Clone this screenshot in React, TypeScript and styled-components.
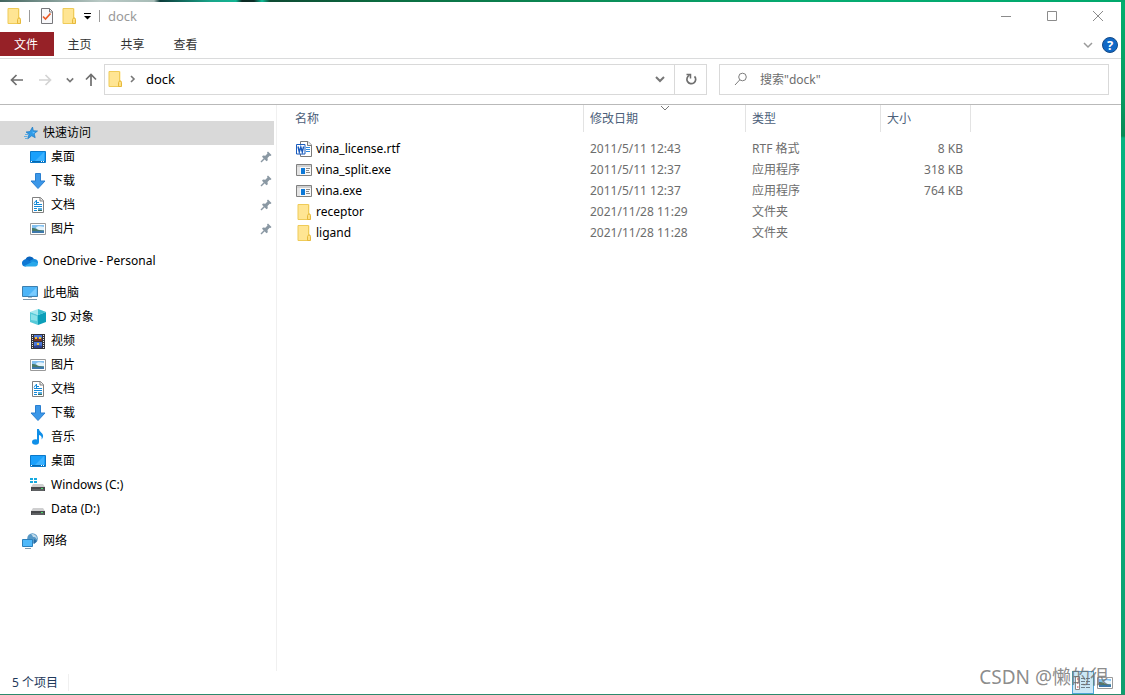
import React from "react";
import styled, { createGlobalStyle } from "styled-components";

const GlobalStyle = createGlobalStyle`
  *, *::before, *::after { box-sizing: border-box; }
  body {
    margin: 0;
    font-family: "Noto Sans", "Noto Sans CJK SC", sans-serif;
    font-size: 12px;
    line-height: 16px;
    color: #000;
  }
  button, input { font: inherit; color: inherit; }
  svg { display: block; flex: none; }
`;

/* ---------- icons ---------- */

const FolderIcon = () => (
  <svg width="14" height="16" viewBox="0 0 14 16" aria-hidden="true">
    <path d="M1 .5h11.500v10h.5v5H1z" fill="#ffe593" />
    <path d="M1 .5h10.500v9.500h1.500v5.500h-12z" fill="none" stroke="#efcb58" />
    <path d="M10.500 15.500v-4l1-1.500h1l1 1.500v4z" fill="#ffe082" stroke="#e6b93c" />
  </svg>
);

const CheckPageIcon = () => (
  <svg width="16" height="16" viewBox="0 0 16 16" aria-hidden="true">
    <path d="M3.500 .5h8l3 3v12h-11z" fill="#f8f8fa" stroke="#77777b" />
    <path d="M11.500 .5v3.500h3" fill="none" stroke="#77777b" />
    <path d="M5 8.500l2.500 2.500 5-5.500" fill="none" stroke="#ea5a26" strokeWidth="1.700" />
  </svg>
);

const StarIcon = () => (
  <svg width="16" height="16" viewBox="0 0 16 16" aria-hidden="true">
    <path
      d="M10.500 2l.8 3.700 4.200.3-3.300 2.700 1 4-3.500-1.900-4 3 1.300-4.500-3-2.300 4-.4z"
      fill="#2f9be8"
      stroke="#1b78c2"
      strokeWidth=".7"
    />
    <path d="M3 9.500h3M2 11.500h3.500M3 13.500h2" stroke="#63aee2" />
    <path d="M10 4l.8 3 2.400.2-2.300 1.600z" fill="#6cc4ff" />
  </svg>
);

const DesktopIcon = () => (
  <svg width="16" height="16" viewBox="0 0 16 16" aria-hidden="true">
    <path d="M.5 2.500h15v11h-15z" fill="#1aa0fb" stroke="#0b78c9" />
    <path d="M14 3v9L5 12z" fill="#3cb2ff" />
    <path d="M1 12.500h14" stroke="#0668ae" />
    <path d="M1 12.500h1M11 12.500h1M13 12.500h1" stroke="#fff" />
  </svg>
);

const DownloadIcon = () => (
  <svg width="16" height="16" viewBox="0 0 16 16" aria-hidden="true">
    <path d="M5.500 .5h5v7.500h4.500L8 15.500 1 8h4.500z" fill="#3b97e8" stroke="#2a7fd0" />
  </svg>
);

const DocumentIcon = () => (
  <svg width="16" height="16" viewBox="0 0 16 16" aria-hidden="true">
    <path d="M2.500 .5h8l3 3v12h-11z" fill="#fff" stroke="#808080" />
    <path d="M10 .5v3.500h3.500" fill="#ececec" stroke="#808080" />
    <path d="M4 6.500l2-3M6.500 3v4M7 5.500h2M4 7.500h8M4 9.500h8" stroke="#1489d8" fill="none" />
    <path d="M4 11.500h3M4 13.500h3" stroke="#1489d8" />
    <path d="M8 11h4v2H8z" fill="#58aee0" />
    <path d="M8 13h4v1H8z" fill="#3a6a5a" />
  </svg>
);

const PictureIcon = () => (
  <svg width="16" height="16" viewBox="0 0 16 16" aria-hidden="true">
    <path d="M.5 2.500h15v11h-15z" fill="#fff" stroke="#9a9a9a" />
    <path d="M2 4h12v8H2z" fill="#83c0f0" />
    <path d="M6 6.500c2-2 5-1.500 8-.5v3H7z" fill="#e4f3fc" />
    <path d="M2 7c3-.5 5 1.500 7 2l5 .5v1H2z" fill="#4a7a68" />
    <path d="M2 10h12v2H2z" fill="#3d78ac" />
  </svg>
);

const OneDriveIcon = () => (
  <svg width="16" height="16" viewBox="0 0 16 16" aria-hidden="true">
    <path d="M3.500 6.500A4.600 4.600 0 0 1 12 6l-2.500 4L2 8z" fill="#0a64bd" />
    <path d="M0 10.500a3.800 3.800 0 0 1 5-4l6 3.500-7.500 3.500A3.300 3.300 0 0 1 0 10.500z" fill="#0f78d4" />
    <path d="M11.500 6a3.700 3.700 0 0 1 4.500 4l-4.500 1.500L7.500 8z" fill="#1890df" />
    <path d="M2 13l9-4.500 4.800 1.500c.5 2-.8 3.500-2.500 3.500H3.500z" fill="#28a8ea" />
  </svg>
);

const ComputerIcon = () => (
  <svg width="16" height="16" viewBox="0 0 16 16" aria-hidden="true">
    <path d="M.5 1.500h15v10H.5z" fill="#4db5f8" stroke="#3d7fae" />
    <path d="M14.500 2.500v8L6 11z" fill="#79cbff" />
    <path d="M6 12h4v1H6z" fill="#a8bac8" />
    <path d="M1 14.500h14" stroke="#7b96aa" />
  </svg>
);

const CubeIcon = () => (
  <svg width="16" height="16" viewBox="0 0 16 16" aria-hidden="true">
    <path d="M0 3l8-3 8 3-8 3z" fill="#a5e8ef" />
    <path d="M0 3l8 3v10l-8-3z" fill="#56cad9" />
    <path d="M8 6l8-3v10l-8 3z" fill="#0c9fb9" />
    <path d="M8 0l8 3-8 3z" fill="#3dbfd0" />
    <path d="M1 5l6 2v5l-6-1z" fill="#8ae1e9" />
  </svg>
);

const VideoIcon = () => (
  <svg width="16" height="16" viewBox="0 0 16 16" aria-hidden="true">
    <path d="M1 1h14v15H1z" fill="#323238" />
    <path d="M2.500 2v14M13.500 2v14" stroke="#e9e9e9" strokeDasharray="1 1" />
    <path d="M4 2h8v6H4zM4 9h8v6H4z" fill="#4d78d8" />
    <path d="M4 5l2-1 3 2 3-1v3H4z" fill="#7a3526" />
    <path d="M5 4h2v2H5zM9 4h2v2H9zM7 10h2v3H7z" fill="#f3c436" />
    <path d="M4 13l4-1 4 1v2H4z" fill="#2c3f8c" />
  </svg>
);

const MusicIcon = () => (
  <svg width="16" height="16" viewBox="0 0 16 16" aria-hidden="true">
    <ellipse cx="5.500" cy="13" rx="3.500" ry="2.800" fill="#108fe8" />
    <path d="M7 0h2c0 3 5 4 4 8-.3 1.200-1 2-1.500 2.500.8-2.500-.5-4-2.500-4.500v7H7z" fill="#108fe8" />
  </svg>
);

const DriveIcon = ({ system = false }: { system?: boolean }) => (
  <svg width="16" height="16" viewBox="0 0 16 16" aria-hidden="true">
    {system && <path d="M0 1h3v2H0zM4 1h3v2H4zM0 4h3v2H0zM4 4h3v2H4z" fill="#16a9e0" />}
    <path d="M3 7h10l2 3H1z" fill="#cfcfd0" />
    <path d="M1 10h14v4H1z" fill="#47484b" />
    <path d="M2 13h12" stroke="#77787b" />
    <path d="M11 11.500h2" stroke="#48e06a" />
  </svg>
);

const NetworkIcon = () => (
  <svg width="16" height="16" viewBox="0 0 16 16" aria-hidden="true">
    <circle cx="10.500" cy="5.500" r="5.300" fill="#5798c6" />
    <path d="M9 1c2 1 1 3 3 3s2 2 3 2c0-3-2-5-6-5z" fill="#c2dcec" />
    <path d="M12 6l3 2-3 3z" fill="#2b6da4" />
    <path d="M.5 6.500h10v7H.5z" fill="#4fb9fa" stroke="#2d80bb" />
    <path d="M3 15.500h6" stroke="#7f9aac" />
  </svg>
);

const WordIcon = () => (
  <svg width="16" height="16" viewBox="0 0 16 16" aria-hidden="true">
    <path d="M4.500 .5h7.500l3.500 3.500v11.500h-11z" fill="#fff" stroke="#7a7a7a" />
    <path d="M11.500 .5v4h4" fill="#eee" stroke="#7a7a7a" />
    <path d="M10 6.500h4M10 8.500h4M10 10.500h4" stroke="#2b8ae0" />
    <path d="M.5 3.500h8.500v9.500H.5z" fill="#fff" stroke="#185abd" />
    <path d="M2 5.500l1.300 5.500 1.500-5 1.500 5 1.300-5.500" fill="none" stroke="#185abd" strokeWidth="1.400" />
  </svg>
);

const ExeIcon = () => (
  <svg width="16" height="16" viewBox="0 0 16 16" aria-hidden="true">
    <path d="M.5 2.500h15v11H.5z" fill="#f8f8f8" stroke="#808080" />
    <path d="M1 3h14v2H1z" fill="#d0d0d0" />
    <path d="M1 5h3v8H1z" fill="#e4e4e4" />
    <path d="M5 6h4v6H5z" fill="#0c78d7" />
    <path d="M10 6.500h4M10 8.500h3M10 10.500h4" stroke="#8a8a8a" />
  </svg>
);

const PinIcon = () => (
  <svg width="12" height="12" viewBox="0 0 12 12" aria-hidden="true">
    <path d="M7 1.500l1-1L11.500 4l-1 1-.8-.2L7.500 7l.3 2.200-1.300 1.100L2 5.800l1-1.300 2.300.3 2.200-2.300z" fill="#8a98a3" />
    <path d="M4.500 7.500L1 11" stroke="#8a98a3" strokeWidth="1.500" />
  </svg>
);

interface ChevronProps {
  color?: string;
  weight?: number;
  size?: number;
}

const ChevronDown = ({ color = "#777", weight = 2, size = 10 }: ChevronProps) => (
  <svg width={size} height={size} viewBox="0 0 10 10" aria-hidden="true">
    <path d="M1 3l4 4 4-4" fill="none" stroke={color} strokeWidth={weight} />
  </svg>
);

const ChevronRight = () => (
  <svg width="6" height="8" viewBox="0 0 6 8" aria-hidden="true">
    <path d="M1 1l3 3-3 3" fill="none" stroke="#777" strokeWidth="1.600" />
  </svg>
);

const ArrowIcon = ({ angle = 0, color = "#6f6f6f" }: { angle?: number; color?: string }) => (
  <svg width="14" height="14" viewBox="0 0 14 14" aria-hidden="true">
    <path
      d="M13 7H2M6.500 2L1.500 7l5 5"
      fill="none"
      stroke={color}
      strokeWidth="1.700"
      transform={`rotate(${angle} 7 7)`}
    />
  </svg>
);

const RefreshIcon = () => (
  <svg width="12" height="12" viewBox="0 0 12 12" aria-hidden="true">
    <path d="M4.500 2.300A4.400 4.400 0 1 0 9.500 3.300" fill="none" stroke="#6f6f6f" strokeWidth="1.700" />
    <path d="M1.500 1.500h4V5.500" fill="none" stroke="#6f6f6f" strokeWidth="1.500" />
  </svg>
);

const SearchIcon = () => (
  <svg width="14" height="14" viewBox="0 0 14 14" aria-hidden="true">
    <circle cx="8.500" cy="5" r="3.800" fill="none" stroke="#7d7d7d" />
    <path d="M5.800 7.800L1 13" stroke="#7d7d7d" />
  </svg>
);

const MenuArrowIcon = () => (
  <svg width="7" height="8" viewBox="0 0 7 8" aria-hidden="true">
    <path d="M0 1.500h7" stroke="#000" />
    <path d="M0 4h7L3.500 7.500z" fill="#000" />
  </svg>
);

const MinimizeIcon = () => (
  <svg width="10" height="10" viewBox="0 0 10 10" aria-hidden="true">
    <path d="M0 5.500h10" stroke="#8b8b8b" />
  </svg>
);
const MaximizeIcon = () => (
  <svg width="10" height="10" viewBox="0 0 10 10" aria-hidden="true">
    <path d="M.5 .5h9v9h-9z" fill="none" stroke="#8b8b8b" />
  </svg>
);
const CloseIcon = () => (
  <svg width="10" height="10" viewBox="0 0 10 10" aria-hidden="true">
    <path d="M0 0l10 10M10 0L0 10" stroke="#8b8b8b" />
  </svg>
);

const DetailsViewIcon = () => (
  <svg width="16" height="14" viewBox="0 0 16 14" aria-hidden="true">
    <path d="M.5 .5h4v13h-4z" fill="#fff" stroke="#8a8a8a" />
    <path d="M2 3h1.500M2 7h1.500M2 11h1.500" stroke="#c43a3a" />
    <path d="M6 2.500h4M11 2.500h4M6 5.500h4M11 5.500h4M6 8.500h4M11 8.500h4M6 11.500h4M11 11.500h4" stroke="#6f7f8a" />
  </svg>
);

/* ---------- layout ---------- */

const Desktop = styled.div`
  display: flex;
  min-height: 100vh;
  padding: 2px 4px 1px 0;
  background:
    linear-gradient(90deg, #42655f 0, #b9c9c5 100px, #a7bcb7 154px, #0c3b3a 160px, #19a489 210px, #12b593 236px, #0b2a24 242px, #0c2d27 254px, #0fc09a 262px, #0e4a33 270px, #0b6b40 380px, #0b8a55 580px, #06ac72 800px, #00a86c 100%)
      top / 100% 2px no-repeat,
    linear-gradient(#2c8a6c, #2c8a6c) bottom / 100% 1px no-repeat,
    linear-gradient(#00b06e 0, #059a60 100px, #078a55 136px, #04b480 138px, #04b07c 400px, #0d9e6e 100%);
`;

const Window = styled.div`
  position: relative;
  display: flex;
  flex: 1;
  flex-direction: column;
  min-width: 0;
  background: #fff;
`;

const TitleBar = styled.header`
  display: flex;
  align-items: center;
  height: 30px;
  padding: 0 0 2px 7px;
`;

const QuickTools = styled.div`
  display: flex;
  flex: 1;
  align-items: center;
  gap: 8px;
`;

const ToolButton = styled.button`
  display: flex;
  padding: 0;
  border: 0;
  background: none;
`;

const Separator = styled.span`
  width: 1px;
  height: 12px;
  background: #9a9a9a;
`;

const Title = styled.h1`
  margin: 0;
  color: #999;
  font-size: 13px;
  font-weight: 400;
`;

const CaptionButton = styled.button`
  display: flex;
  align-items: center;
  justify-content: center;
  width: 46px;
  height: 28px;
  padding: 0;
  border: 0;
  background: none;
`;

const RibbonBar = styled.nav`
  display: flex;
  align-items: flex-start;
  height: 27px;
  border-bottom: 1px solid #dadbdc;
`;

const RibbonTab = styled.button<{ $primary?: boolean }>`
  width: ${(p) => (p.$primary ? 54 : 53)}px;
  height: 24px;
  padding: 2px 2px 0 0;
  border: 0;
  background: ${(p) => (p.$primary ? "#962127" : "none")};
  color: ${(p) => (p.$primary ? "#fff" : "#333")};
`;

const RibbonEnd = styled.div`
  display: flex;
  flex: 1;
  align-items: center;
  justify-content: flex-end;
  gap: 9px;
  height: 26px;
  padding-right: 3px;
`;

const HelpButton = styled.button`
  width: 16px;
  height: 16px;
  padding: 0;
  border: 1px solid #164a86;
  border-radius: 50%;
  background: #0f68c6;
  color: #fff;
  font-size: 13px;
  font-weight: 700;
  line-height: 14px;
`;

const NavigationBar = styled.div`
  display: flex;
  align-items: center;
  height: 46px;
  padding: 0 12px 5px 10px;
  border-bottom: 1px solid #b9b9b9;
`;

const HistoryButtons = styled.div`
  display: flex;
  align-items: center;
  width: 94px;
  padding-top: 1px;
`;

const HistoryButton = styled.button<{ $wide?: boolean }>`
  display: flex;
  align-items: center;
  width: ${(p) => (p.$wide ? 28 : 18)}px;
  height: 24px;
  padding: 0;
  border: 0;
  background: none;
`;

const AddressBar = styled.div`
  display: flex;
  flex: 1;
  align-items: center;
  height: 31px;
  border: 1px solid #d9d9d9;
`;

const Crumbs = styled.div`
  display: flex;
  flex: 1;
  align-items: center;
  gap: 8px;
  padding-left: 3px;
`;

const Crumb = styled.button`
  padding: 0 2px;
  border: 0;
  background: none;
  font-size: 13px;
  line-height: 18px;
`;

const AddressButton = styled.button<{ $divided?: boolean }>`
  display: flex;
  align-items: center;
  justify-content: center;
  width: ${(p) => (p.$divided ? 32 : 28)}px;
  height: 29px;
  padding: 0;
  border: 0;
  border-left: ${(p) => (p.$divided ? "1px solid #d9d9d9" : "0")};
  background: none;
`;

const SearchBox = styled.label`
  display: flex;
  align-items: center;
  gap: 12px;
  width: 390px;
  height: 31px;
  margin-left: 12px;
  padding-left: 14px;
  border: 1px solid #d9d9d9;
`;

const SearchInput = styled.input`
  flex: 1;
  min-width: 0;
  padding: 2px 0 0;
  border: 0;
  outline: 0;
  background: none;
  &::placeholder { color: #6d6d6d; opacity: 1; }
`;

const Body = styled.div`
  display: flex;
  flex: 1;
`;

const Sidebar = styled.nav`
  display: flex;
  flex-direction: column;
  gap: 8px;
  width: 277px;
  padding: 16px 2px 0 0;
  border-right: 1px solid #f0f0f0;
`;

const TreeGroup = styled.ul`
  margin: 0;
  padding: 0;
  list-style: none;
`;

const TreeLink = styled.a<{ $nested?: boolean; $active?: boolean }>`
  display: flex;
  align-items: center;
  gap: 5px;
  height: 24px;
  padding: 0 2px 0 ${(p) => (p.$nested ? 30 : 22)}px;
  background: ${(p) => (p.$active ? "#d9d9d9" : "none")};
  color: #000;
  text-decoration: none;
`;

const TreeLabel = styled.span`
  flex: 1;
`;

const FileArea = styled.main`
  flex: 1;
  min-width: 0;
`;

const FileTable = styled.table`
  width: 694px;
  border-collapse: separate;
  border-spacing: 0;
  table-layout: fixed;
`;

const HeaderCell = styled.th<{ $width: number; $first?: boolean }>`
  position: relative;
  width: ${(p) => p.$width}px;
  height: 27px;
  padding: 0 0 0 ${(p) => (p.$first ? 18 : 6)}px;
  border-right: 1px solid #e3e3e3;
  color: #4c607a;
  font-weight: 400;
  text-align: left;
`;

const SortMark = styled.span`
  position: absolute;
  top: -2px;
  left: 50%;
  transform: translateX(-50%);
`;

const FileRows = styled.tbody`
  &::before {
    content: "";
    display: table-row;
    height: 6px;
  }
`;

const Cell = styled.td<{ $align?: "right" }>`
  height: 21px;
  padding: 0 8px 0 6px;
  color: #6d6d6d;
  text-align: ${(p) => p.$align ?? "left"};
`;

const NameCell = styled(Cell)`
  padding-left: 19px;
  color: #000;
`;

const FileName = styled.div`
  display: flex;
  align-items: center;
  gap: 4px;
`;

const FileIcon = styled.span`
  display: flex;
  justify-content: center;
  width: 16px;
`;

const StatusBar = styled.footer`
  display: flex;
  align-items: center;
  height: 23px;
  padding: 0 5px 0 12px;
  color: #1e395b;
`;

const StatusText = styled.span`
  flex: 1;
`;

const ItemCount = styled.span`
  padding-right: 10px;
  border-right: 1px solid #f0f0f0;
`;

const ViewButton = styled.button<{ $active?: boolean }>`
  display: flex;
  align-items: center;
  justify-content: center;
  width: 22px;
  height: 23px;
  padding: 0;
  border: ${(p) => (p.$active ? "1px solid #4fa5d8" : "0")};
  background: ${(p) => (p.$active ? "#cbe8f6" : "none")};
`;

const Watermark = styled.span`
  position: absolute;
  right: 12px;
  bottom: 4px;
  color: rgba(110, 110, 110, 0.8);
  font-size: 19px;
  line-height: 26px;
  pointer-events: none;
`;

/* ---------- data ---------- */

interface TreeItem {
  label: string;
  icon: React.ReactNode;
  nested?: boolean;
  active?: boolean;
  pinned?: boolean;
}

const tree: TreeItem[][] = [
  [
    { label: "快速访问", icon: <StarIcon />, active: true },
    { label: "桌面", icon: <DesktopIcon />, nested: true, pinned: true },
    { label: "下载", icon: <DownloadIcon />, nested: true, pinned: true },
    { label: "文档", icon: <DocumentIcon />, nested: true, pinned: true },
    { label: "图片", icon: <PictureIcon />, nested: true, pinned: true },
  ],
  [{ label: "OneDrive - Personal", icon: <OneDriveIcon /> }],
  [
    { label: "此电脑", icon: <ComputerIcon /> },
    { label: "3D 对象", icon: <CubeIcon />, nested: true },
    { label: "视频", icon: <VideoIcon />, nested: true },
    { label: "图片", icon: <PictureIcon />, nested: true },
    { label: "文档", icon: <DocumentIcon />, nested: true },
    { label: "下载", icon: <DownloadIcon />, nested: true },
    { label: "音乐", icon: <MusicIcon />, nested: true },
    { label: "桌面", icon: <DesktopIcon />, nested: true },
    { label: "Windows (C:)", icon: <DriveIcon system />, nested: true },
    { label: "Data (D:)", icon: <DriveIcon />, nested: true },
  ],
  [{ label: "网络", icon: <NetworkIcon /> }],
];

const files = [
  { name: "vina_license.rtf", icon: <WordIcon />, date: "2011/5/11 12:43", type: "RTF 格式", size: "8 KB" },
  { name: "vina_split.exe", icon: <ExeIcon />, date: "2011/5/11 12:37", type: "应用程序", size: "318 KB" },
  { name: "vina.exe", icon: <ExeIcon />, date: "2011/5/11 12:37", type: "应用程序", size: "764 KB" },
  { name: "receptor", icon: <FolderIcon />, date: "2021/11/28 11:29", type: "文件夹", size: "" },
  { name: "ligand", icon: <FolderIcon />, date: "2021/11/28 11:28", type: "文件夹", size: "" },
];

export default function App() {
  return (
    <Desktop>
      <GlobalStyle />
      <Window>
        <TitleBar>
          <QuickTools>
            <FolderIcon />
            <Separator />
            <ToolButton aria-label="属性"><CheckPageIcon /></ToolButton>
            <ToolButton aria-label="新建文件夹"><FolderIcon /></ToolButton>
            <ToolButton aria-label="自定义快速访问工具栏"><MenuArrowIcon /></ToolButton>
            <Separator />
            <Title>dock</Title>
          </QuickTools>
          <CaptionButton aria-label="最小化"><MinimizeIcon /></CaptionButton>
          <CaptionButton aria-label="最大化"><MaximizeIcon /></CaptionButton>
          <CaptionButton aria-label="关闭"><CloseIcon /></CaptionButton>
        </TitleBar>

        <RibbonBar>
          <RibbonTab $primary>文件</RibbonTab>
          <RibbonTab>主页</RibbonTab>
          <RibbonTab>共享</RibbonTab>
          <RibbonTab>查看</RibbonTab>
          <RibbonEnd>
            <ToolButton aria-label="展开功能区"><ChevronDown color="#9a9a9a" weight={1.5} /></ToolButton>
            <HelpButton aria-label="帮助">?</HelpButton>
          </RibbonEnd>
        </RibbonBar>

        <NavigationBar>
          <HistoryButtons>
            <HistoryButton $wide aria-label="后退"><ArrowIcon /></HistoryButton>
            <HistoryButton $wide aria-label="前进"><ArrowIcon angle={180} color="#d4d4d4" /></HistoryButton>
            <HistoryButton aria-label="最近位置"><ChevronDown size={8} /></HistoryButton>
            <HistoryButton aria-label="上移"><ArrowIcon angle={90} /></HistoryButton>
          </HistoryButtons>
          <AddressBar>
            <Crumbs>
              <FolderIcon />
              <ChevronRight />
              <Crumb>dock</Crumb>
            </Crumbs>
            <AddressButton aria-label="以前的位置"><ChevronDown /></AddressButton>
            <AddressButton $divided aria-label="刷新"><RefreshIcon /></AddressButton>
          </AddressBar>
          <SearchBox>
            <SearchIcon />
            <SearchInput type="text" aria-label="搜索" placeholder={'搜索"dock"'} />
          </SearchBox>
        </NavigationBar>

        <Body>
          <Sidebar>
            {tree.map((group, g) => (
              <TreeGroup key={g}>
                {group.map((item) => (
                  <li key={item.label}>
                    <TreeLink href="#" $nested={item.nested} $active={item.active}>
                      {item.icon}
                      <TreeLabel>{item.label}</TreeLabel>
                      {item.pinned && <PinIcon />}
                    </TreeLink>
                  </li>
                ))}
              </TreeGroup>
            ))}
          </Sidebar>
          <FileArea>
            <FileTable>
              <thead>
                <tr>
                  <HeaderCell $width={307} $first>名称</HeaderCell>
                  <HeaderCell $width={162}>
                    修改日期
                    <SortMark><ChevronDown weight={1} /></SortMark>
                  </HeaderCell>
                  <HeaderCell $width={135}>类型</HeaderCell>
                  <HeaderCell $width={90}>大小</HeaderCell>
                </tr>
              </thead>
              <FileRows>
                {files.map((file) => (
                  <tr key={file.name}>
                    <NameCell>
                      <FileName>
                        <FileIcon>{file.icon}</FileIcon>
                        {file.name}
                      </FileName>
                    </NameCell>
                    <Cell>{file.date}</Cell>
                    <Cell>{file.type}</Cell>
                    <Cell $align="right">{file.size}</Cell>
                  </tr>
                ))}
              </FileRows>
            </FileTable>
          </FileArea>
        </Body>

        <StatusBar>
          <StatusText>
            <ItemCount>5 个项目</ItemCount>
          </StatusText>
          <ViewButton $active aria-label="详细信息"><DetailsViewIcon /></ViewButton>
          <ViewButton aria-label="大图标"><PictureIcon /></ViewButton>
        </StatusBar>
        <Watermark>CSDN @懒的很</Watermark>
      </Window>
    </Desktop>
  );
}
